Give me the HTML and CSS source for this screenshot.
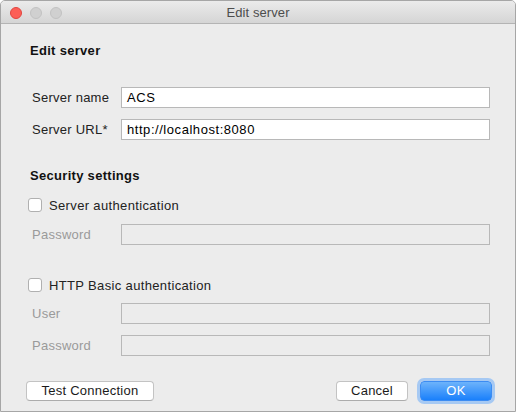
FILE: index.html
```html
<!DOCTYPE html>
<html>
<head>
<meta charset="utf-8">
<link rel="stylesheet" href="styles.css">
</head>
<body>
<div class="window">
  <div class="titlebar">
    <div class="lights">
      <span class="light red"></span>
      <span class="light gray"></span>
      <span class="light gray"></span>
    </div>
    <div class="title">Edit server</div>
  </div>
  <div class="content">
    <div class="heading first">Edit server</div>
    <div class="form-grid grid-top">
      <label class="label">Server name</label>
      <div class="field">ACS</div>
      <label class="label">Server URL*</label>
      <div class="field">http://localhost:8080</div>
    </div>
    <div class="heading second">Security settings</div>
    <div class="check check-one"><span class="box"></span><span>Server authentication</span></div>
    <div class="form-grid grid-pass">
      <label class="label disabled">Password</label>
      <div class="field off"></div>
    </div>
    <div class="check check-two"><span class="box"></span><span>HTTP Basic authentication</span></div>
    <div class="form-grid grid-basic">
      <label class="label disabled">User</label>
      <div class="field off"></div>
      <label class="label disabled">Password</label>
      <div class="field off"></div>
    </div>
    <div class="footer">
      <button class="btn test">Test Connection</button>
      <div class="spacer"></div>
      <button class="btn cancel">Cancel</button>
      <button class="btn ok">OK</button>
    </div>
  </div>
</div>
</body>
</html>
```
FILE: styles.css
```css
* { box-sizing: border-box; }
html, body { margin: 0; padding: 0; background: #ffffff; }
body {
  font-family: "Liberation Sans", Arial, sans-serif;
  font-size: 13px;
  color: #222;
  letter-spacing: 0.25px;
}
.window {
  width: 516px;
  height: 412px;
  border: 1px solid #a6a6a6;
  border-radius: 5px 5px 0 0;
  background: #ececec;
  overflow: hidden;
  display: flex;
  flex-direction: column;
}
.titlebar {
  height: 23px;
  flex: none;
  background: linear-gradient(#ebebeb, #d5d5d5);
  border-bottom: 1px solid #b4b4b4;
  position: relative;
  display: flex;
  align-items: center;
  justify-content: center;
}
.lights {
  position: absolute;
  left: 9px;
  top: 6px;
  display: flex;
  gap: 8px;
}
.light {
  width: 12px;
  height: 12px;
  border-radius: 50%;
  display: block;
}
.light.red { background: #fc5f57; border: 1px solid #e1453f; }
.light.gray { background: #d0d0d0; border: 1px solid #c2c2c2; }
.title {
  color: #4d4d4d;
  font-size: 13px;
  line-height: 15px;
  letter-spacing: 0.1px;
}
.content {
  flex: 1;
  padding: 0 25px 0 25px;
  display: flex;
  flex-direction: column;
}
.heading {
  font-weight: bold;
  color: #111;
  line-height: 15px;
  margin-left: 4px;
  letter-spacing: 0.3px;
}
.heading.first { margin-top: 19px; }
.heading.second { margin-top: 28px; }
.form-grid {
  display: grid;
  grid-template-columns: 89px 1fr;
  row-gap: 11px;
  margin-left: 6px;
  align-items: center;
}
.grid-top { margin-top: 29px; }
.grid-pass { margin-top: 11px; }
.grid-basic { margin-top: 10px; }
.label { line-height: 15px; color: #222; }
.label.disabled { color: #9a9a9a; }
.field {
  height: 21px;
  border: 1px solid #b8b8b8;
  background: #fff;
  padding: 0 5px;
  line-height: 19px;
  color: #000;
  letter-spacing: 0.55px;
}
.field.off { background: #ececec; }
.check {
  display: flex;
  align-items: center;
  gap: 7px;
  height: 16px;
  margin-left: 2px;
  color: #222;
  letter-spacing: 0.35px;
}
.check-one { margin-top: 14px; }
.check-two { margin-top: 32px; }
.box {
  width: 14px;
  height: 14px;
  border: 1px solid #b0b0b0;
  border-radius: 3px;
  background: #fff;
  flex: none;
}
.footer {
  margin-top: 25px;
  display: flex;
  align-items: center;
  margin-right: -2px;
}
.spacer { flex: 1; }
.btn {
  font-family: "Liberation Sans", Arial, sans-serif;
  font-size: 13px;
  letter-spacing: 0.25px;
  height: 20px;
  padding: 0;
  border: 1px solid #c3c3c3;
  border-bottom-color: #acacac;
  border-radius: 4px;
  background: #fff;
  color: #1a1a1a;
  line-height: 18px;
}
.test { width: 128px; }
.cancel { width: 72px; margin-right: 12px; }
.ok {
  width: 72px;
  color: #fff;
  background: linear-gradient(#6db3fb, #1a80fb);
  border-color: #3c8cf2;
  box-shadow: 0 0 0 3px #a6c9f3;
}
```
